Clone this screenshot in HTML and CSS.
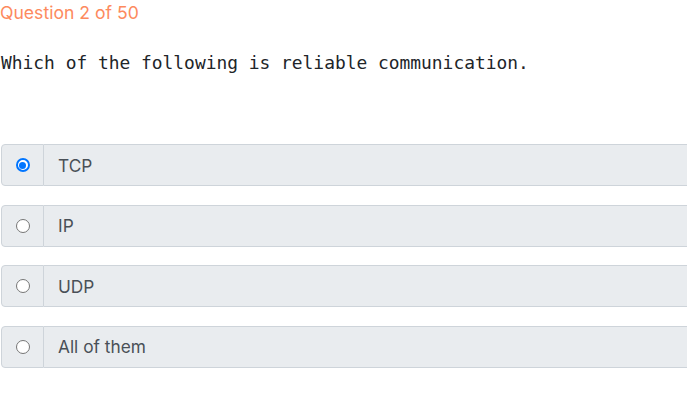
FILE: index.html
```html
<!DOCTYPE html>
<html>
<head>
<meta charset="utf-8">
<link rel="stylesheet" href="styles.css">
</head>
<body>
<div class="quiz">
  <div class="counter">Question 2 of 50</div>
  <div class="question">Which of the following is reliable communication.</div>
  <div class="options">
    <label class="option">
      <span class="check"><span class="radio checked"></span></span>
      <span class="answer">TCP</span>
    </label>
    <label class="option">
      <span class="check"><span class="radio"></span></span>
      <span class="answer">IP</span>
    </label>
    <label class="option">
      <span class="check"><span class="radio"></span></span>
      <span class="answer">UDP</span>
    </label>
    <label class="option">
      <span class="check"><span class="radio"></span></span>
      <span class="answer">All of them</span>
    </label>
  </div>
</div>
</body>
</html>
```

FILE: styles.css
```css
html, body {
  margin: 0;
  padding: 0;
  background: #fff;
  overflow: hidden;
}
.quiz {
  width: 720px;
}
.counter {
  font-family: "Inter", "Noto Sans", sans-serif;
  font-size: 17.6px;
  color: #fd8a5e;
  line-height: 26px;
  height: 26px;
}
.question {
  font-family: "DejaVu Sans Mono", "Liberation Mono", monospace;
  font-size: 17.9px;
  color: #212529;
  line-height: 24px;
  margin-top: 25px;
  padding-left: 1px;
}
.options {
  display: flex;
  flex-direction: column;
  gap: 18.67px;
  margin-top: 69px;
  margin-left: 1px;
}
.option {
  display: flex;
  height: 42px;
}
.check {
  width: 43px;
  box-sizing: border-box;
  background: #e9ecef;
  border: 1px solid #ced4da;
  border-radius: 4px 0 0 4px;
  display: flex;
  align-items: center;
  justify-content: center;
}
.radio {
  width: 14px;
  height: 14px;
  box-sizing: border-box;
  border-radius: 50%;
  border: 1px solid #767676;
  background: #fff;
}
.radio.checked {
  border: 2px solid #0075ff;
  background: #fff;
  position: relative;
}
.radio.checked::after {
  content: "";
  position: absolute;
  left: 1.5px;
  top: 1.5px;
  width: 7px;
  height: 7px;
  border-radius: 50%;
  background: #0075ff;
}
.answer {
  flex: 1;
  box-sizing: border-box;
  background: #e9ecef;
  border: 1px solid #ced4da;
  border-left: 0;
  display: flex;
  align-items: center;
  padding-left: 14px;
  font-family: "Inter", "Noto Sans", sans-serif;
  font-size: 17.3px;
  color: #495057;
}
```
